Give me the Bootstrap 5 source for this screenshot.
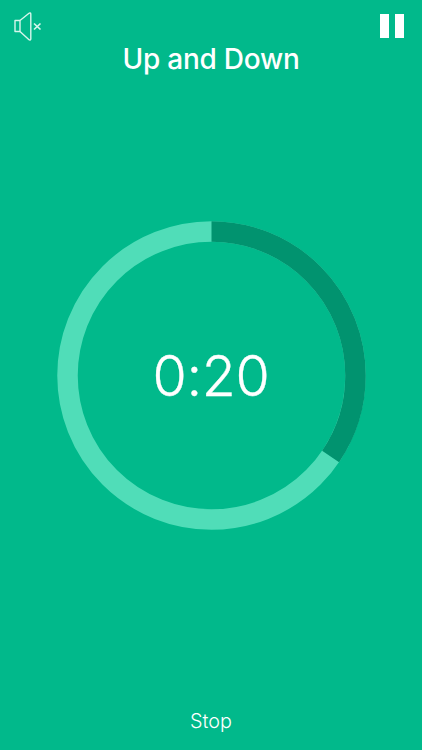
<!DOCTYPE html>
<html lang="en">
<head>
<meta charset="utf-8">
<title>Up and Down</title>
<link href="https://cdn.jsdelivr.net/npm/bootstrap@5.3.0/dist/css/bootstrap.min.css" rel="stylesheet">
<style>
html,body{height:100%;margin:0;overflow:hidden}
body{background:#01b98b;color:#fff;font-family:Inter,"Liberation Sans",sans-serif}
.screen{height:750px;width:422px}
.topbar{height:43px;padding:12px 18px 0 14px}
.heading{font-size:28px;font-weight:500;line-height:32px;margin:0;letter-spacing:-.25px}
.dial{margin-top:146px;width:309px;height:309px;display:grid;place-items:center}
.dial>*{grid-area:1/1}
.clock{font-size:55.500px;font-weight:300;line-height:1;letter-spacing:-.3px;-webkit-text-stroke:.3px #fff}
.stop{font-size:19.800px;font-weight:300;color:#fff;line-height:24px;margin-bottom:17px;padding:0;border:0;background:none}
.pausewrap{gap:5.500px;padding-top:2px}
.pausebar{width:9.500px;height:23.500px;background:#fff}
.ring-dark{stroke:#01936f}
.ring-light{stroke:#50ddb8}
</style>
</head>
<body>
<div class="screen d-flex flex-column align-items-center">
  <div class="topbar w-100 d-flex justify-content-between align-items-start">
    <svg width="28" height="29" viewBox="0 0 28 29" fill="none" stroke="#d6f6ec" stroke-width="1.400" stroke-linejoin="round" aria-label="Muted">
      <path d="M1 8.500h5v11H1z"/>
      <path d="M6 8.500 15 1.200c.7-.5 1.800-.3 1.800.7v25.200c0 1-1.100 1.200-1.800.7L6 19.500"/>
      <path d="M20 11.500l6.500 6M26.500 11.500l-6.500 6" stroke-width="1.700"/>
    </svg>
    <div class="pausewrap d-flex"><span class="pausebar"></span><span class="pausebar"></span></div>
  </div>
  <h1 class="heading">Up and Down</h1>
  <div class="dial">
    <svg width="309" height="309" viewBox="0 0 309 309" fill="none" stroke-width="20.500">
      <circle class="ring-light" cx="154.500" cy="154.500" r="144"/>
      <circle class="ring-dark" cx="154.500" cy="154.500" r="144" pathLength="100" stroke-dasharray="34.500 100" transform="rotate(-90 154.500 154.500)"/>
    </svg>
    <div class="clock">0:20</div>
  </div>
  <button type="button" class="stop btn mt-auto">Stop</button>
</div>
<script src="https://cdn.jsdelivr.net/npm/bootstrap@5.3.0/dist/js/bootstrap.bundle.min.js"></script>
</body>
</html>
